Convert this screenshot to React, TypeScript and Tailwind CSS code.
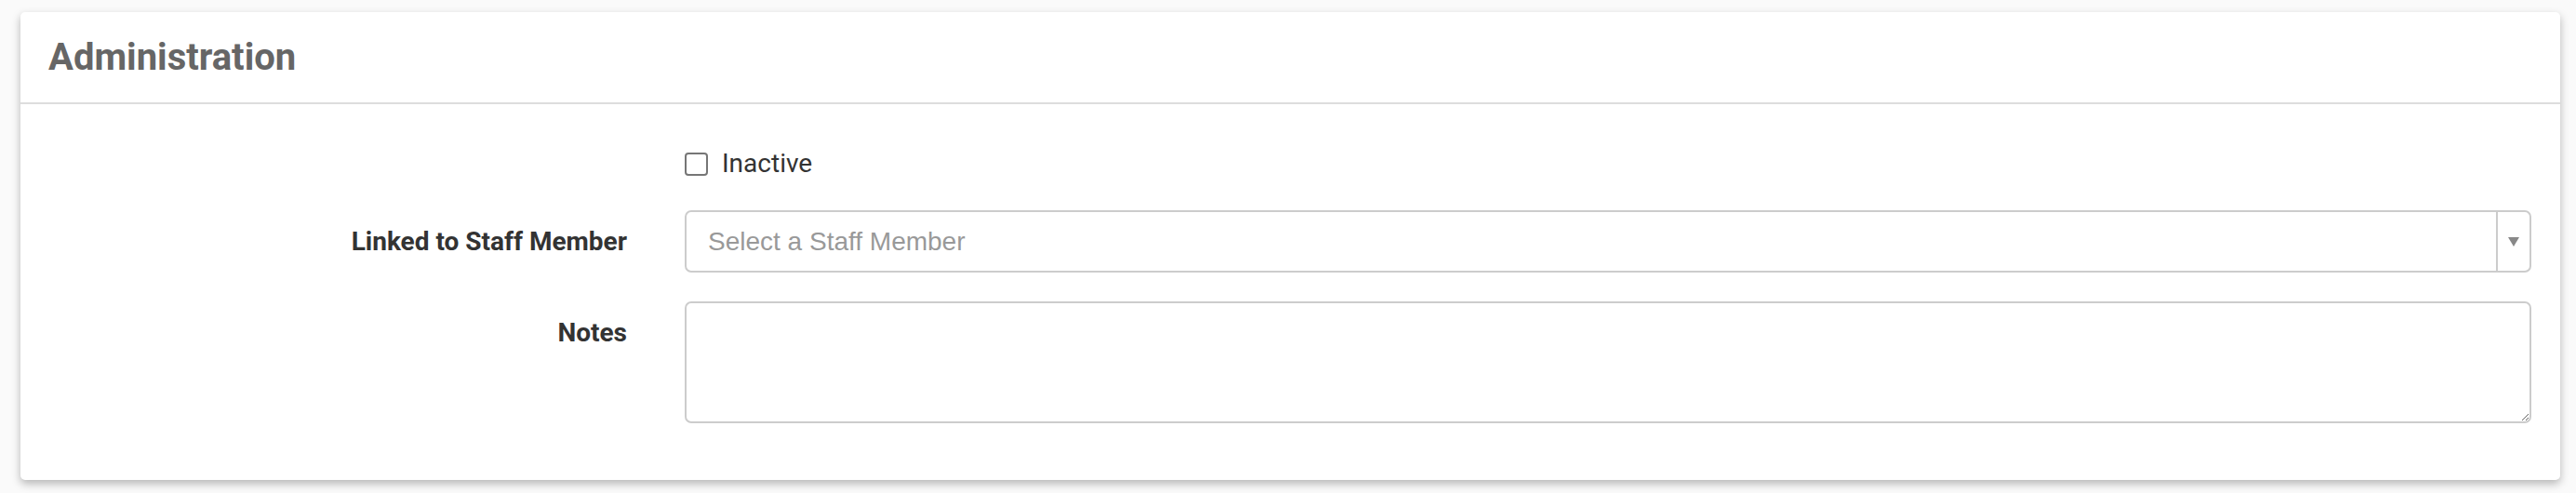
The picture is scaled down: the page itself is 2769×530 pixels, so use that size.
export default function App() {
  return (
    <div
      className="min-h-[530px] bg-[#fafafa] pt-[13px] pl-[22px] pr-[17px]"
      style={{ fontFamily: 'Roboto, "Liberation Sans", sans-serif' }}
    >
      <div className="bg-white rounded-[5px] shadow-[0_4px_10px_rgba(0,0,0,0.28)]">
        <div className="h-[99px] flex items-center px-[30px] border-b-2 border-[#dddddd]">
          <h2 className="text-[40px] font-bold text-[#666666] leading-none">Administration</h2>
        </div>

        <div className="pt-[44px] pb-[61px] pr-[31px] flex flex-col">
          {/* inactive */}
          <div className="flex h-[40px] items-center">
            <div className="w-[652px] shrink-0" />
            <label className="ml-[62px] flex items-center gap-[15px]">
              <span className="w-[25px] h-[25px] border-2 border-[#767676] rounded-[4px] bg-white" />
              <span className="text-[28px] text-[#333333] leading-[40px]">Inactive</span>
            </label>
          </div>

          {/* staff member */}
          <div className="flex items-start mt-[30px]">
            <div className="w-[652px] shrink-0 text-right pt-[14px] text-[28px] leading-[40px] font-bold text-[#333333]">
              Linked to Staff Member
            </div>
            <div className="ml-[62px] flex-1 h-[67px] border-2 border-[#cccccc] rounded-[7px] flex bg-white">
              <div
                className="flex-1 flex items-center pl-[23px] text-[28px] text-[#999999]"
                style={{ fontFamily: '"Liberation Sans", Arial, sans-serif' }}
              >
                Select a Staff Member
              </div>
              <div className="w-[36px] border-l-2 border-[#cccccc] flex items-center justify-center">
                <svg width="12" height="10" viewBox="0 0 12 10">
                  <path d="M0 0 L12 0 L6 10 Z" fill="#888888" />
                </svg>
              </div>
            </div>
          </div>

          {/* notes */}
          <div className="flex items-start mt-[31px]">
            <div className="w-[652px] shrink-0 text-right pt-[14px] text-[28px] leading-[40px] font-bold text-[#333333]">
              Notes
            </div>
            <textarea className="ml-[62px] flex-1 h-[131px] border-2 border-[#cccccc] rounded-[7px] bg-white outline-none" />
          </div>
        </div>
      </div>
    </div>
  )
}
